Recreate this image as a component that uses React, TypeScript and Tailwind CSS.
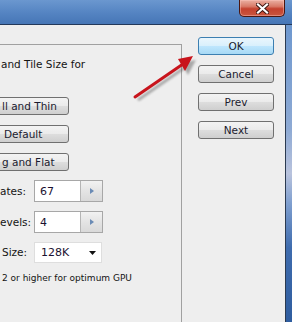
import React from "react";

const grayBtn =
  "h-[18px] border border-[#707070] rounded-[3px] bg-[linear-gradient(180deg,#f3f3f3_0%,#ebebeb_48%,#dddddd_52%,#cfcfcf_100%)] text-[#1b1b2f] leading-[16px]";

function CloseButton() {
  return (
    <div className="h-[17px] w-[46px] flex items-center justify-center border border-t-0 border-[#4a1610] rounded-b-[5px] bg-[linear-gradient(180deg,#eab0a2_0%,#d87a68_40%,#c4412e_55%,#c9563f_100%)] shadow-[inset_0_0_0_1px_rgba(255,200,190,0.45)]">
      <svg width="13" height="11" viewBox="0 0 13 11">
        <path d="M2 1.5 L11 9.5 M11 1.5 L2 9.5" stroke="#3b1510" strokeWidth="4" strokeLinecap="square" />
        <path d="M2 1.5 L11 9.5 M11 1.5 L2 9.5" stroke="#ffffff" strokeWidth="2.2" strokeLinecap="square" />
      </svg>
    </div>
  );
}

function SpinInput({ value }: { value: string }) {
  return (
    <div className="w-[69px] h-[22px] flex border border-[#a7a7a7] bg-white">
      <div className="flex-1 pl-[5px] flex items-center text-[#1a1030] text-[11px]">{value}</div>
      <div className="w-[22px] border-l border-[#b5b5b5] bg-[linear-gradient(180deg,#f2f2f2_0%,#e4e4e4_50%,#d9d9d9_100%)] flex items-center justify-center">
        <svg width="4" height="6" viewBox="0 0 4 6">
          <path d="M0 0 L4 3 L0 6 Z" fill="#6a8bb5" />
        </svg>
      </div>
    </div>
  );
}

export default function App() {
  return (
    <div className="w-[292px] h-[322px] relative overflow-hidden bg-[#eeeeee] font-['DejaVu_Sans',sans-serif] text-[10.5px] leading-[13px] text-[#141414]">
      {/* title bar */}
      <div className="h-[25px] flex justify-end pr-[7px] border-b border-[#22385a] bg-[linear-gradient(180deg,#6b97cf_0%,#5685c3_50%,#4676b6_100%)]">
        <CloseButton />
      </div>

      <div className="flex h-[297px]">
        <div className="flex-1 flex border-r border-[#2b3a50]">
          {/* group box, cut off on the left */}
          <div className="w-[182px] pt-[19px] overflow-hidden">
            <div className="h-full border-t border-r border-[#a0a0a0] flex flex-col">
              <div className="mt-[13px] pl-[1px] whitespace-nowrap">and Tile Size for</div>
              <div className={`${grayBtn} mt-[26px] -ml-[6px] w-[75px] pl-[7px]`}>ll and Thin</div>
              <div className={`${grayBtn} mt-[10px] -ml-[6px] w-[75px] pl-[9px]`}>Default</div>
              <div className={`${grayBtn} mt-[10px] -ml-[6px] w-[75px] pl-[7px]`}>g and Flat</div>
              <div className="mt-[9px] flex items-center">
                <span className="w-[34px]">ates:</span>
                <SpinInput value="67" />
              </div>
              <div className="mt-[9px] flex items-center">
                <span className="w-[34px]">evels:</span>
                <SpinInput value="4" />
              </div>
              <div className="mt-[9px] flex items-center">
                <span className="w-[34px] pl-[2px]">Size:</span>
                <div className="w-[68px] h-[21px] border border-[#dedede] bg-white flex items-center justify-between pl-[6px] pr-[5px] text-[11px] text-[#1a1030]">
                  <span>128K</span>
                  <svg width="7" height="4" viewBox="0 0 7 4">
                    <path d="M0 0 L7 0 L3.5 4 Z" fill="#111111" />
                  </svg>
                </div>
              </div>
              <div className="mt-[10px] pl-[2px] text-[9px] leading-[11px] whitespace-nowrap">2 or higher for optimum GPU</div>
            </div>
          </div>

          {/* right buttons */}
          <div className="pl-[16px] pt-[12px] flex flex-col gap-[10px]">
            <div className="w-[76px] h-[18px] border border-[#3c7fb1] rounded-[3px] bg-[linear-gradient(180deg,#eaf6fd_0%,#d9f0fc_48%,#bee6fd_52%,#a7d9f5_100%)] text-center leading-[16px] text-[#1b1b2f]">OK</div>
            <div className={`${grayBtn} w-[76px] text-center`}>Cancel</div>
            <div className={`${grayBtn} w-[76px] text-center`}>Prev</div>
            <div className={`${grayBtn} w-[76px] text-center`}>Next</div>
          </div>
        </div>
        {/* window frame */}
        <div className="w-[6px] bg-[linear-gradient(180deg,#6e98cf_0%,#8eaad4_35%,#b9c3dd_50%,#7f9fcf_60%,#3f6cae_75%,#2f5d9f_100%)]" />
      </div>

      {/* red annotation arrow */}
      <svg className="absolute left-0 top-0 pointer-events-none" width="292" height="322" viewBox="0 0 292 322">
        <defs>
          <filter id="sh" x="-20%" y="-20%" width="140%" height="140%">
            <feGaussianBlur stdDeviation="1.2" />
          </filter>
        </defs>
        <g filter="url(#sh)" opacity="0.45">
          <path d="M138 100 L184 68" stroke="#555" strokeWidth="3" />
          <path d="M196 60 L181 63 L188 75 Z" fill="#555" />
        </g>
        <path d="M135 97 L183 64" stroke="#c8141c" strokeWidth="3" strokeLinecap="round" />
        <path d="M193 56 L178 59 L185 71 Z" fill="#c8141c" />
      </svg>
    </div>
  );
}
